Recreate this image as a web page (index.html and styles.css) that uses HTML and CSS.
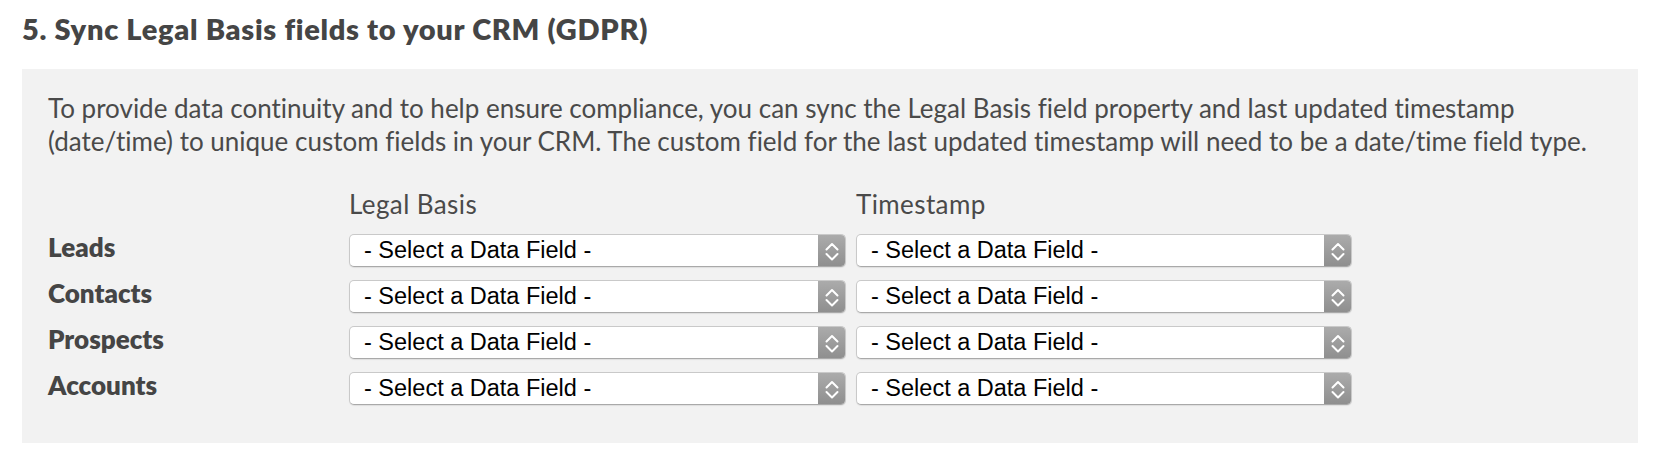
FILE: index.html
```html
<!DOCTYPE html>
<html lang="en">
<head>
<meta charset="utf-8">
<title>Sync Legal Basis fields</title>
<link rel="stylesheet" href="styles.css">
</head>
<body>
<h2 class="title">5. Sync Legal Basis fields to your CRM (GDPR)</h2>
<div class="panel">
  <p class="desc">To provide data continuity and to help ensure compliance, you can sync the Legal Basis field property and last updated timestamp (date/time) to unique custom fields in your CRM. The custom field for the last updated timestamp will need to be a date/time field type.</p>
  <div class="map">
    <div class="corner"></div>
    <div class="colhead">Legal Basis</div>
    <div class="colhead">Timestamp</div>

    <div class="rowlabel">Leads</div>
    <div class="select"><span class="value">- Select a Data Field -</span><span class="arrow"><svg viewBox="0 0 28 33" width="28" height="33"><path d="M8.5 15.5 L14 10 L19.5 15.5 M8.5 20 L14 25.5 L19.5 20" fill="none" stroke="#fff" stroke-width="2" stroke-linecap="round" stroke-linejoin="round"/></svg></span></div>
    <div class="select"><span class="value">- Select a Data Field -</span><span class="arrow"><svg viewBox="0 0 28 33" width="28" height="33"><path d="M8.5 15.5 L14 10 L19.5 15.5 M8.5 20 L14 25.5 L19.5 20" fill="none" stroke="#fff" stroke-width="2" stroke-linecap="round" stroke-linejoin="round"/></svg></span></div>

    <div class="rowlabel">Contacts</div>
    <div class="select"><span class="value">- Select a Data Field -</span><span class="arrow"><svg viewBox="0 0 28 33" width="28" height="33"><path d="M8.5 15.5 L14 10 L19.5 15.5 M8.5 20 L14 25.5 L19.5 20" fill="none" stroke="#fff" stroke-width="2" stroke-linecap="round" stroke-linejoin="round"/></svg></span></div>
    <div class="select"><span class="value">- Select a Data Field -</span><span class="arrow"><svg viewBox="0 0 28 33" width="28" height="33"><path d="M8.5 15.5 L14 10 L19.5 15.5 M8.5 20 L14 25.5 L19.5 20" fill="none" stroke="#fff" stroke-width="2" stroke-linecap="round" stroke-linejoin="round"/></svg></span></div>

    <div class="rowlabel">Prospects</div>
    <div class="select"><span class="value">- Select a Data Field -</span><span class="arrow"><svg viewBox="0 0 28 33" width="28" height="33"><path d="M8.5 15.5 L14 10 L19.5 15.5 M8.5 20 L14 25.5 L19.5 20" fill="none" stroke="#fff" stroke-width="2" stroke-linecap="round" stroke-linejoin="round"/></svg></span></div>
    <div class="select"><span class="value">- Select a Data Field -</span><span class="arrow"><svg viewBox="0 0 28 33" width="28" height="33"><path d="M8.5 15.5 L14 10 L19.5 15.5 M8.5 20 L14 25.5 L19.5 20" fill="none" stroke="#fff" stroke-width="2" stroke-linecap="round" stroke-linejoin="round"/></svg></span></div>

    <div class="rowlabel">Accounts</div>
    <div class="select"><span class="value">- Select a Data Field -</span><span class="arrow"><svg viewBox="0 0 28 33" width="28" height="33"><path d="M8.5 15.5 L14 10 L19.5 15.5 M8.5 20 L14 25.5 L19.5 20" fill="none" stroke="#fff" stroke-width="2" stroke-linecap="round" stroke-linejoin="round"/></svg></span></div>
    <div class="select"><span class="value">- Select a Data Field -</span><span class="arrow"><svg viewBox="0 0 28 33" width="28" height="33"><path d="M8.5 15.5 L14 10 L19.5 15.5 M8.5 20 L14 25.5 L19.5 20" fill="none" stroke="#fff" stroke-width="2" stroke-linecap="round" stroke-linejoin="round"/></svg></span></div>
  </div>
</div>
</body>
</html>
```

FILE: styles.css
```css
html, body {
  margin: 0;
  padding: 0;
  background: #ffffff;
}

body {
  font-family: "Lato", "Open Sans", sans-serif;
  font-variant-ligatures: none;
  color: #4a4a4a;
  padding: 0 18px 0 22px;
}

.title {
  margin: 0;
  padding-top: 12px;
  height: 69px;
  box-sizing: border-box;
  font-size: 29px;
  line-height: 34px;
  letter-spacing: 0.7px;
  font-weight: 800;
  color: #454545;
}

.panel {
  background: #f2f2f2;
  width: 1616px;
  height: 374px;
  box-sizing: border-box;
  padding: 23px 25px 0 26px;
}

.desc {
  margin: 0;
  font-size: 26px;
  line-height: 33px;
  color: #4a4a4a;
  width: 1540px;
}

.map {
  margin-top: 30px;
  display: grid;
  grid-template-columns: 291px 497px 496px;
  column-gap: 10px;
  grid-auto-rows: 33px;
  row-gap: 13px;
}

.colhead {
  font-size: 26px;
  line-height: 33px;
  letter-spacing: 0.4px;
  color: #4a4a4a;
}

.rowlabel {
  font-size: 26px;
  font-weight: 800;
  line-height: 33px;
  letter-spacing: 0;
  color: #454545;
  margin-top: -3px;
}

.select {
  display: flex;
  height: 33px;
  box-sizing: border-box;
  background: #ffffff;
  border: 1px solid #c9c9c9;
  border-bottom-color: #a9a9a9;
  border-radius: 5px;
  box-shadow: 0 1px 1px rgba(0, 0, 0, 0.08);
  overflow: hidden;
}

.value {
  flex: 1;
  padding-left: 14px;
  font-family: "Liberation Sans", Arial, sans-serif;
  font-size: 23.5px;
  line-height: 30px;
  color: #000000;
  white-space: nowrap;
}

.arrow {
  width: 28px;
  flex: none;
  display: flex;
  align-items: center;
  justify-content: center;
  background: linear-gradient(#acacac, #8e8e8e);
  margin: -1px -1px -1px 0;
  height: 33px;
}

.arrow svg {
  display: block;
}
```
